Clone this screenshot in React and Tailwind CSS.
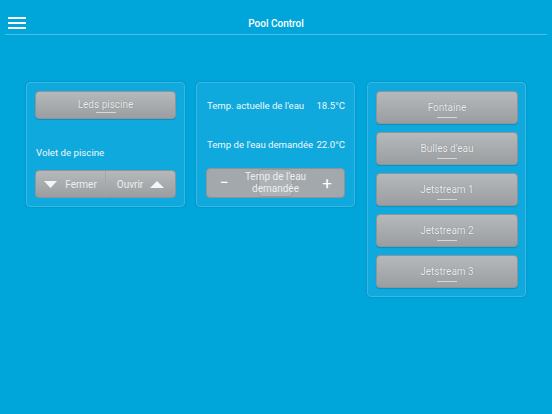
import React, { useState } from 'react';

// Gray pill button used across the panels
function GrayButton({ label, className = '' }) {
  return (
    <button
      type="button"
      className={`relative w-full flex items-center justify-center rounded-[4px] border border-[#8f9498] bg-gradient-to-b from-[#b6b9bc] to-[#9b9ea1] shadow-[0_1px_1px_rgba(0,0,0,0.15)] text-[#eceeef] text-[10px] [text-shadow:0_0_1px_rgba(0,0,0,0.35)] ${className}`}
    >
      <span className="leading-none">{label}</span>
      <span className="absolute bottom-[5px] h-px w-[20px] bg-[#d6d9db]" />
    </button>
  );
}

function Panel({ children, className = '' }) {
  return (
    <div className={`rounded-[4px] border border-[#3ab6e2] bg-[#10a9dd] shadow-[0_0_2px_rgba(0,60,100,0.25)] ${className}`}>
      {children}
    </div>
  );
}

export default function App() {
  const [target, setTarget] = useState(22.0);

  return (
    <div className="w-[552px] h-[414px] bg-[#00a5da] font-['Roboto','Liberation_Sans',sans-serif] text-white overflow-hidden">
      {/* Header */}
      <div className="relative h-[35px] mx-[5px] border-b border-[#4cbde6] flex items-center justify-center">
        <button type="button" className="absolute left-[3px] top-[17px] flex flex-col gap-[3px]">
          <span className="block w-[18px] h-[2px] bg-white" />
          <span className="block w-[18px] h-[2px] bg-white" />
          <span className="block w-[18px] h-[2px] bg-white" />
        </button>
        <span className="mt-[12px] text-[10px] font-medium">Pool Control</span>
      </div>

      {/* Panels */}
      <div className="flex items-start pt-[47px] pl-[26px]">
        {/* Left panel */}
        <Panel className="w-[159px] h-[125px] px-[8px] pt-[8px] flex flex-col">
          <GrayButton label="Leds piscine" className="h-[28px]" />
          <div className="mt-[28px] pl-[1px] text-[9.7px] text-[#eef8fc] leading-[12px]">Volet de piscine</div>
          <div className="mt-[11px] h-[28px] flex rounded-[4px] border border-[#8f9498] bg-gradient-to-b from-[#b6b9bc] to-[#9b9ea1] text-[#eceeef] text-[10px]">
            <button type="button" className="flex-1 flex items-center justify-center gap-[8px] border-r border-[#a3a7aa]">
              <svg width="13" height="7" viewBox="0 0 13 7"><polygon points="0,0 13,0 6.5,7" fill="#f4f5f6" /></svg>
              <span>Fermer</span>
            </button>
            <button type="button" className="flex-1 flex items-center justify-center gap-[7px]">
              <span>Ouvrir</span>
              <svg width="14" height="7" viewBox="0 0 14 7"><polygon points="0,7 14,7 7,0" fill="#f4f5f6" /></svg>
            </button>
          </div>
        </Panel>

        {/* Middle panel */}
        <Panel className="ml-[11px] w-[159px] h-[125px] px-[9px] flex flex-col text-[9.6px] text-[#eef8fc] whitespace-nowrap">
          <div className="mt-[17px] h-[12px] flex justify-between items-center pl-[1px]">
            <span>Temp. actuelle de l'eau</span>
            <span>18.5°C</span>
          </div>
          <div className="mt-[27px] h-[12px] flex items-center pl-[1px]">
            <span>Temp de l'eau demandée</span>
            <span className="ml-auto">{target.toFixed(1)}°C</span>
          </div>
          <div className="mt-[17px] relative h-[30px] flex items-center rounded-[4px] border border-[#8e9397] bg-[#a3a8ac]">
            <button type="button" onClick={() => setTarget(t => t - 0.5)} className="w-[34px] text-[16px] leading-none text-white">−</button>
            <div className="flex-1 relative h-full flex justify-center">
              <div className="w-[35px] h-full rounded-[4px] border border-[#969b9f] bg-[#adb2b6]" />
              <div className="absolute inset-0 flex flex-col items-center justify-center text-center text-[10px] leading-[12px] text-[#eceeef]">
                <span>Temp de l'eau</span>
                <span>demandée</span>
              </div>
            </div>
            <button type="button" onClick={() => setTarget(t => t + 0.5)} className="w-[34px] text-[17px] leading-none text-white">+</button>
          </div>
        </Panel>

        {/* Right panel */}
        <Panel className="ml-[12px] w-[159px] pl-[8px] pr-[7px] pt-[8px] pb-[8px] flex flex-col gap-[8px]">
          {['Fontaine', "Bulles d'eau", 'Jetstream 1', 'Jetstream 2', 'Jetstream 3'].map(name => (
            <GrayButton key={name} label={name} className="h-[33px]" />
          ))}
        </Panel>
      </div>
    </div>
  );
}
